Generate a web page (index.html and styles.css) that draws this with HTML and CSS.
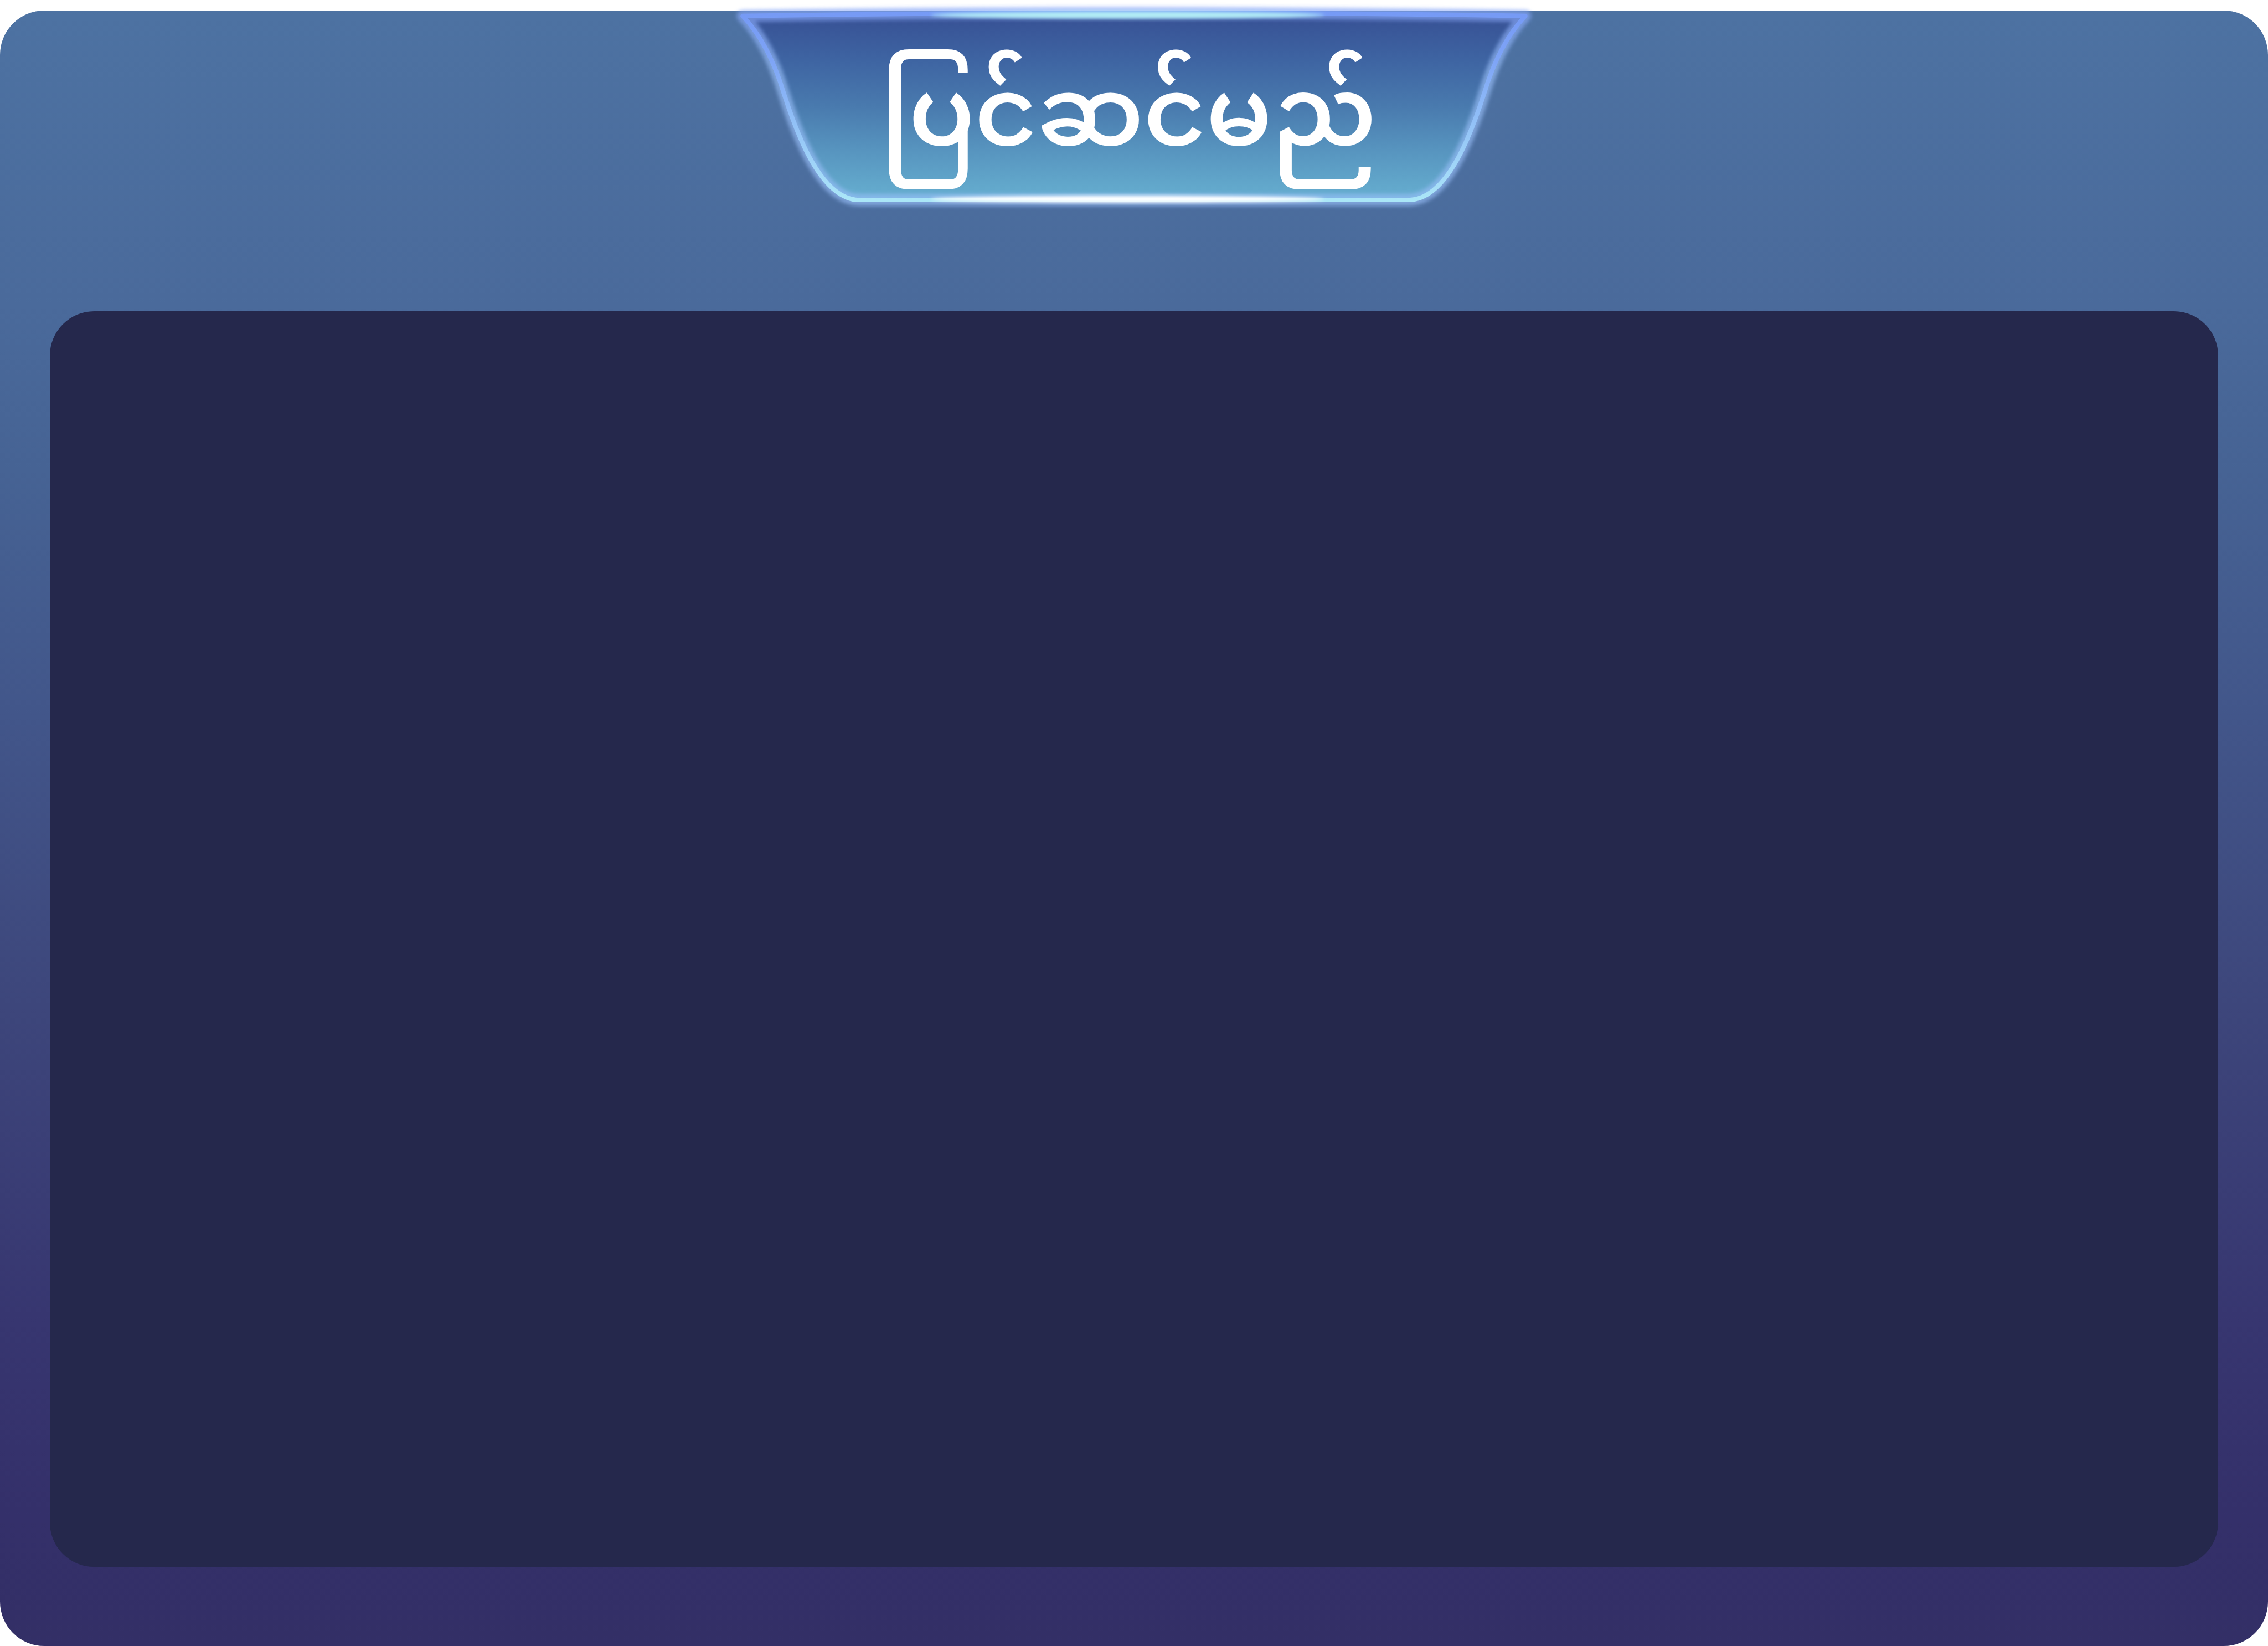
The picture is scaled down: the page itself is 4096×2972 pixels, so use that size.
FILE: index.html
```html
<!DOCTYPE html>
<html lang="my">
<head>
<meta charset="utf-8">
<meta name="viewport" content="width=device-width, initial-scale=1">
<title>ပြင်ဆင်မည်</title>
<link rel="stylesheet" href="styles.css">
</head>
<body>
<main class="dialog">
  <header class="dialog-header">
    <div class="tab">
      <svg class="tab-shape" viewBox="1640 0 1859 490" aria-hidden="true">
        <defs>
          <linearGradient id="fill" x1="0" y1="0" x2="0" y2="1">
            <stop offset="0.04" stop-color="#385396"/>
            <stop offset="0.25" stop-color="#3e64a2"/>
            <stop offset="0.5" stop-color="#497aae"/>
            <stop offset="0.75" stop-color="#5896c0"/>
            <stop offset="1" stop-color="#66afd0"/>
          </linearGradient>
          <linearGradient id="edge" gradientUnits="userSpaceOnUse" x1="0" y1="30" x2="0" y2="453">
            <stop offset="0" stop-color="#769af5"/>
            <stop offset="0.25" stop-color="#7ea4f6"/>
            <stop offset="0.9" stop-color="#a5dcf8"/>
            <stop offset="1" stop-color="#aae6f7"/>
          </linearGradient>
          <linearGradient id="glow" gradientUnits="userSpaceOnUse" x1="0" y1="30" x2="0" y2="453">
            <stop offset="0" stop-color="#86a6f8"/>
            <stop offset="0.3" stop-color="#98bef8"/>
          </linearGradient>
          <filter id="soft" filterUnits="userSpaceOnUse" x="1600" y="-40" width="1940" height="560"><feGaussianBlur stdDeviation="5"/></filter>
          <filter id="shine" filterUnits="userSpaceOnUse" x="2000" y="-40" width="1140" height="560"><feGaussianBlur stdDeviation="4"/></filter>
          <path id="outline" d="M1683 36Q2569 22 3456 36C3414 80 3384 140 3362 214C3331 310 3277 453 3191 453H1948C1862 453 1808 310 1777 214C1755 140 1725 80 1683 36Z"/>
        </defs>
        <use class="tab-fill" href="#outline"/>
        <use class="tab-glow" href="#outline"/>
        <use class="tab-edge" href="#outline"/>
        <ellipse class="shine-top" cx="2555" cy="34" rx="445" ry="8"/>
        <ellipse class="shine-bottom" cx="2555" cy="451" rx="445" ry="8"/>
      </svg>
      <h1 class="tab-title">ပြင်ဆင်မည်</h1>
    </div>
  </header>
  <section class="dialog-content"></section>
</main>
</body>
</html>
```
FILE: styles.css
```css
* { box-sizing: border-box; }

body {
  margin: 0;
  background: #fff;
}

.dialog {
  display: flex;
  flex-direction: column;
  min-height: calc(100vh - 19px);
  margin-top: 19px;
  padding: 0 90px 143px;
  border-radius: 80px;
  background: linear-gradient(#4d72a2, #4a6a9b 18%, #466394 28%, #42568a 43%, #3d467b 61%, #373670 80%, #34306a 92%, #332f66);
}

.dialog-header {
  display: flex;
  justify-content: center;
  height: 543px;
}

.tab {
  display: grid;
  width: 1482px;
  height: 391px;
  margin-top: -19px;
}

.tab-shape,
.tab-title { grid-area: 1 / 1; }

.tab-shape {
  width: 100%;
  overflow: visible;
}

.tab-fill { fill: url(#fill); }

.tab-glow {
  fill: none;
  stroke: url(#glow);
  stroke-width: 27;
  stroke-linejoin: round;
  opacity: 0.65;
  filter: url(#soft);
}

.tab-edge {
  fill: none;
  stroke: url(#edge);
  stroke-width: 10;
  stroke-linejoin: round;
}

.shine-top {
  fill: #b2eef5;
  filter: url(#shine);
}

.shine-bottom {
  fill: #fff;
  filter: url(#shine);
}

.tab-title {
  z-index: 1;
  margin: 0;
  padding-right: 20px;
  color: #fff;
  font: 600 172px/444px "Noto Sans Myanmar", "Noto Sans", sans-serif;
  text-align: center;
}

.dialog-content {
  flex: 1;
  border-radius: 80px;
  background: #25284c;
}
```
